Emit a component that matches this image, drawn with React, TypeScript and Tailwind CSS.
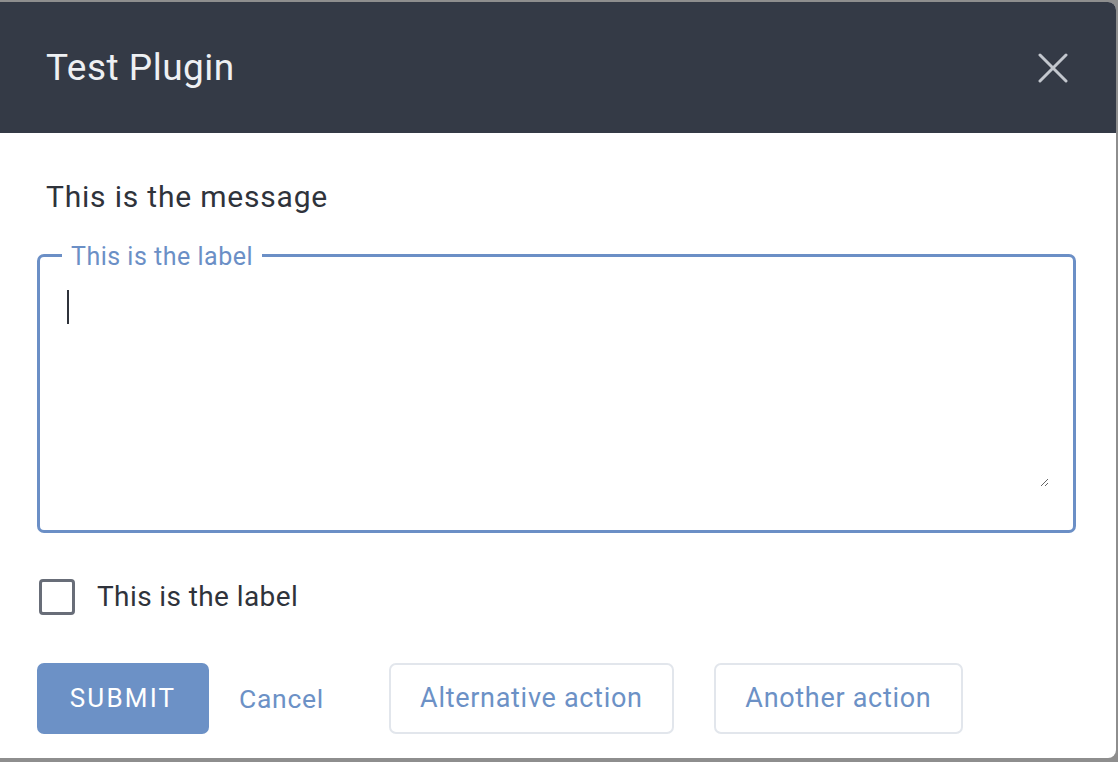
const App = () => {
  return (
    <div className="h-[762px] w-[1118px] bg-[#8e8e8e] pt-[2px] font-['Roboto',sans-serif]">
      <div className="flex h-[756px] w-[1116px] flex-col overflow-hidden rounded-r-lg bg-white">
        <header className="flex h-[131px] shrink-0 items-center justify-between bg-[#343a46] pl-[46px] pr-[48px]">
          <h1 className="text-[37px] font-normal tracking-[0.5px] text-[#eef0f3]">Test Plugin</h1>
          <button className="text-[#c3c7ce]">
            <svg width="30" height="30" viewBox="0 0 30 30" fill="none" stroke="currentColor" strokeWidth="3" strokeLinecap="round">
              <path d="M2 2 L28 28 M28 2 L2 28" />
            </svg>
          </button>
        </header>

        <section className="flex flex-col px-[37px] pt-[47px]">
          <p className="pl-[9px] text-[30px] leading-[34px] tracking-[0.8px] text-[#2f333b]">This is the message</p>

          <fieldset className="mt-[27px] w-[1039px] rounded-[7px] border-[3px] border-[#6b8fc6] pb-[43px] pl-[22px] pr-[24px]">
            <legend className="px-[9px] pt-[3px] text-[25px] leading-[26px] tracking-[0.5px] text-[#6b8fc6]">This is the label</legend>
            <div className="relative h-[217px]">
              <textarea className="block h-full w-full resize-y pt-[10px] text-[28px] leading-[34px] text-[#2f333b] caret-transparent outline-none" />
              <span className="absolute left-[5px] top-[20px] h-[34px] w-[2px] bg-[#2f333b]" />
            </div>
          </fieldset>

          <label className="mt-[46px] flex items-center gap-[22px]">
            <span className="ml-[2px] h-[36px] w-[36px] rounded-[4px] border-[3px] border-[#686d78] bg-white" />
            <span className="text-[28px] leading-[34px] tracking-[0.4px] text-[#2f333b]">This is the label</span>
          </label>

          <div className="mt-[48px] flex items-center">
            <button className="h-[71px] w-[172px] rounded-[7px] bg-[#6c91c6] text-[26px] tracking-[2.2px] text-white">SUBMIT</button>
            <button className="ml-[30px] text-[26.5px] tracking-[0.7px] text-[#6c91c6]">Cancel</button>
            <button className="ml-[65px] h-[71px] w-[285px] rounded-[7px] border-2 border-[#e2e6ec] text-[27px] tracking-[0.7px] text-[#6c91c6]">Alternative action</button>
            <button className="ml-[40px] h-[71px] w-[249px] rounded-[7px] border-2 border-[#e2e6ec] text-[27px] tracking-[0.7px] text-[#6c91c6]">Another action</button>
          </div>
        </section>
      </div>
    </div>
  );
};

export default App;
